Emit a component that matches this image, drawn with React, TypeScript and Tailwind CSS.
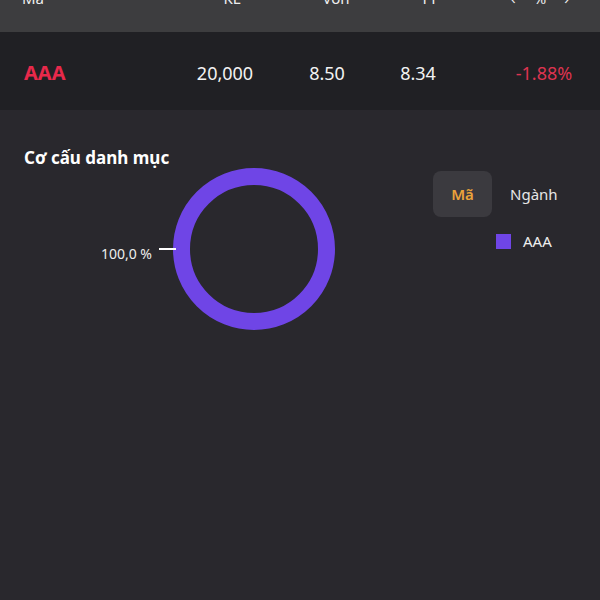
const font = { fontFamily: '"Noto Sans", "Open Sans", sans-serif' };

const Ring = () => (
  <svg width="162" height="162" viewBox="0 0 162 162">
    <circle cx="81" cy="81" r="72.5" fill="none" stroke="#6f45e6" strokeWidth="17" />
  </svg>
);

export default function App() {
  return (
    <div className="w-[600px] h-[600px] overflow-hidden bg-[#29282d] text-[#f2f2f2]" style={font}>
      {/* table header, scrolled so only the bottom of the labels shows */}
      <div className="h-[32px] bg-[#3d3d3f] overflow-hidden">
        <div className="grid grid-cols-[176px_112px_96px_90px_112px] items-center -mt-[12px] text-[15px] leading-[20px] text-[#eeeeee]">
          <div className="pl-[22px]">Mã</div>
          <div className="text-center">KL</div>
          <div className="text-center">Vốn</div>
          <div className="text-center">TT</div>
          <div className="flex items-center justify-center gap-[18px] pl-[20px]">
            <span>‹</span>
            <span>%</span>
            <span>›</span>
          </div>
        </div>
      </div>

      {/* row */}
      <div className="h-[78px] pt-[4px] bg-[#202024] grid grid-cols-[176px_98px_106px_76px_32px_112px] items-center">
        <div className="pl-[24px] text-[20px] font-bold text-[#e8294b]">AAA</div>
        <div className="text-center text-[18px]">20,000</div>
        <div className="text-center text-[18px]">8.50</div>
        <div className="text-center text-[18px]">8.34</div>
        <div />
        <div className="text-center text-[18px] text-[#dc3450]">-1.88%</div>
      </div>

      {/* portfolio structure */}
      <div className="pt-[38px]">
        <h2 className="pl-[24px] text-[17px] font-bold leading-[20px] text-white">Cơ cấu danh mục</h2>
        <div className="flex items-start">
          <div className="w-[335px] flex items-center justify-end">
            <div className="flex items-center translate-x-[3px]">
              <span className="text-[14px] leading-[16px] text-[#eeeeee] translate-y-[5px]">100,0 %</span>
              <span className="ml-[7px] w-[17px] h-[1.5px] bg-white" />
            </div>
            <Ring />
          </div>
          <div className="ml-[98px] mt-[3px]">
            <div className="flex items-center">
              <button className="w-[59px] h-[46px] rounded-lg bg-[#3b3a3f] text-[15px] font-semibold text-[#eba33a]">Mã</button>
              <span className="ml-[18px] text-[15px] text-[#e6e6e6]">Ngành</span>
            </div>
            <div className="flex items-center mt-[13px] ml-[63px]">
              <span className="w-[15px] h-[15px] bg-[#6f45e6]" />
              <span className="ml-[12px] text-[15px] text-[#eeeeee]">AAA</span>
            </div>
          </div>
        </div>
      </div>
    </div>
  );
}
